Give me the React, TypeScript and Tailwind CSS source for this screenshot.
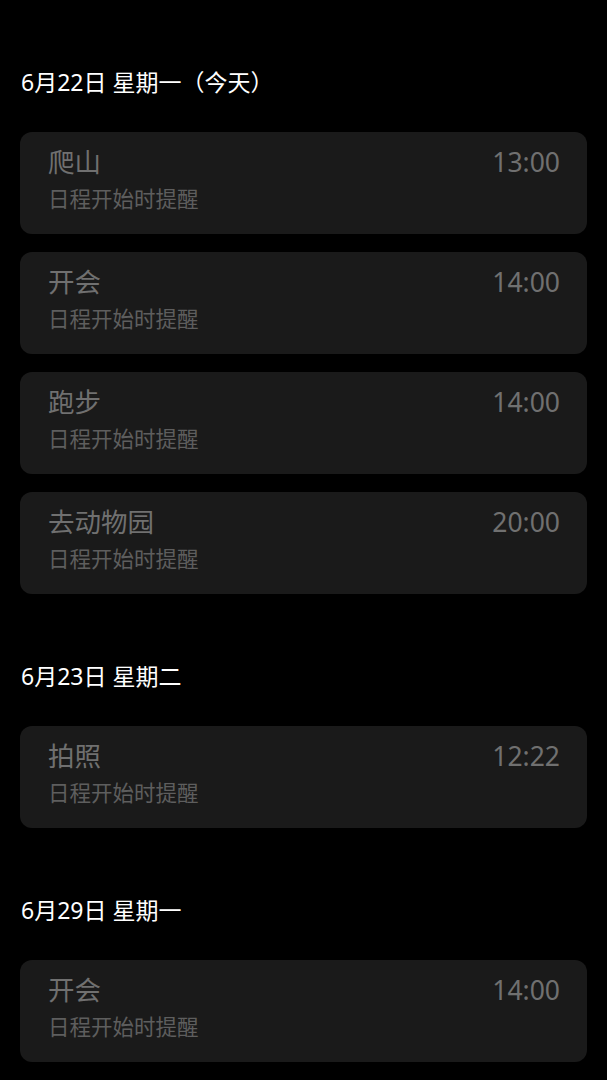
const sections = [
  {
    date: "6月22日 星期一（今天）",
    items: [
      { title: "爬山", time: "13:00" },
      { title: "开会", time: "14:00" },
      { title: "跑步", time: "14:00" },
      { title: "去动物园", time: "20:00" },
    ],
  },
  { date: "6月23日 星期二", items: [{ title: "拍照", time: "12:22" }] },
  { date: "6月29日 星期一", items: [{ title: "开会", time: "14:00" }] },
];

function EventCard({ title, time }: { title: string; time: string }) {
  return (
    <div className="flex h-[102px] items-start justify-between rounded-xl bg-[#1a1a1a] pl-[28px] pr-[27px] pt-[13px]">
      <div className="flex flex-col">
        <span className="text-[26.5px] leading-[34px] text-[#707070]">{title}</span>
        <span className="mt-[5px] text-[21.5px] leading-[30px] text-[#5e5e5e]">
          日程开始时提醒
        </span>
      </div>
      <span className="text-[26.5px] leading-[34px] text-[#707070]">{time}</span>
    </div>
  );
}

export default function App() {
  return (
    <div
      className="min-h-screen bg-black px-5 pt-[35px]"
      style={{ fontFamily: '"Noto Sans", "Noto Sans CJK SC", sans-serif' }}
    >
      {sections.map((s) => (
        <section key={s.date} className="pb-[35px]">
          <h2 className="pb-[35px] pl-[1px] pt-[33px] text-[23px] leading-[29px] text-white">
            {s.date}
          </h2>
          <div className="flex flex-col gap-[18px]">
            {s.items.map((it, i) => (
              <EventCard key={i} title={it.title} time={it.time} />
            ))}
          </div>
        </section>
      ))}
    </div>
  );
}
